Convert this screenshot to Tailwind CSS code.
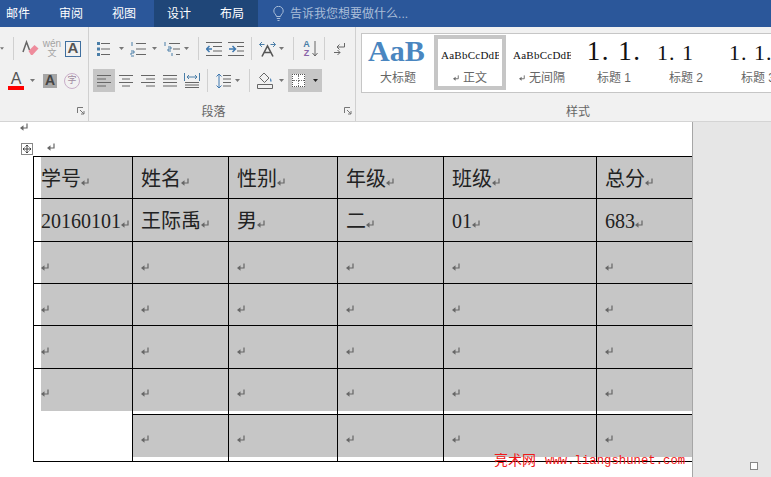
<!DOCTYPE html>
<html lang="zh-CN">
<head>
    <meta charset="UTF-8">
    <title>表格</title>
    <script src="https://cdn.jsdelivr.net/npm/@tailwindcss/browser@4"></script>
</head>
<body class="bg-white">
    <!-- shared icon bits -->
    <svg class="hidden" xmlns="http://www.w3.org/2000/svg">
        <symbol id="caret" viewBox="0 0 5 3"><path d="M0 0h5L2.500 3z" fill="#777"/></symbol>
        <symbol id="ret" viewBox="0 0 8 8"><path d="M7 .5V5H3" fill="none" stroke="#666" stroke-width="1.200"/><path d="M0 5l3.500-2.700v5.400z" fill="#666"/></symbol>
    </svg>

    <div class="relative w-[771px] h-[477px] overflow-hidden flex flex-col font-['Liberation_Sans','Noto_Sans_CJK_SC',sans-serif]">
        <!-- Title tabs -->
        <div class="h-[27px] shrink-0 bg-[#2b579a] flex items-center text-white text-[12px]">
            <span class="ml-[6px]">邮件</span>
            <span class="ml-[29px]">审阅</span>
            <span class="ml-[29px]">视图</span>
            <div class="ml-[18px] h-full w-[104px] bg-[#1f4678] flex items-center">
                <span class="ml-[13px]">设计</span>
                <span class="ml-[29px]">布局</span>
            </div>
            <svg class="ml-[15px]" width="11" height="15" viewBox="0 0 11 15" fill="none" stroke="#a9bdd8"><path d="M3.500 10.500C3 8 .8 7.500.8 5a4.700 4.700 0 019.400 0c0 2.500-2.200 3-2.700 5.500zM3.800 12.500h3.400M4.500 14.500h2"/></svg>
            <span class="ml-[6px] text-[#a9bdd8]">告诉我您想要做什么...</span>
        </div>

        <!-- Ribbon -->
        <div class="h-[95px] shrink-0 bg-[#f1f1f1] border-b border-[#d4d4d4] flex text-[#666]">
            <!-- Font group -->
            <div class="w-[89px] shrink-0 border-r border-[#d0d0d0] pt-[10px]">
                <div class="h-[23px] flex items-center">
                    <svg class="w-[4px] h-[3px]"><use href="#caret"/></svg>
                    <div class="ml-[9px] w-px h-[23px] bg-[#d0d0d0]"></div>
                    <svg class="ml-[8px]" width="17" height="17" viewBox="0 0 17 17"><path d="M1 12L4.500 2l3 8" fill="none" stroke="#666" stroke-width="1.500"/><path d="M6.500 11l6-6 4 3.500-6 6.500H9z" fill="#ee8c9c"/></svg>
                    <div class="ml-[4px] w-[18px] flex flex-col items-center text-[#a3a3a3]">
                        <span class="text-[10px] leading-[10px]">wén</span>
                        <span class="text-[9px] leading-[9px]">文</span>
                    </div>
                    <div class="ml-[4px] w-[16px] h-[16px] border border-[#3f6f9f] flex items-center justify-center text-[15px] font-bold text-[#555]">A</div>
                </div>
                <div class="mt-[9px] h-[23px] flex items-center">
                    <div class="ml-[8px] w-[16px] flex flex-col items-center">
                        <span class="text-[16px] leading-[15px] text-[#555]">A</span>
                        <div class="w-full h-[4px] bg-[#ff0000]"></div>
                    </div>
                    <svg class="ml-[6px] w-[5px] h-[3px]"><use href="#caret"/></svg>
                    <div class="ml-[8px] w-[14px] h-[14px] bg-[#a6a6a6] flex items-center justify-center text-[14px] font-bold text-[#444]">A</div>
                    <div class="ml-[7px] w-[16px] h-[16px] rounded-full border border-[#c9aec9] flex items-center justify-center text-[9px] text-[#a08aa0]">字</div>
                </div>
                <div class="relative mt-[11px] h-[18px]">
                    <svg class="absolute left-[77px] top-[4px]" width="8" height="8" viewBox="0 0 8 8" fill="none" stroke="#777"><path d="M.5 6V.5H6M3 3l4 4M7 4v3H4"/></svg>
                </div>
            </div>

            <!-- Paragraph group -->
            <div class="w-[267px] shrink-0 border-r border-[#d0d0d0] pt-[10px]">
                <div class="h-[23px] flex items-center">
                    <svg class="ml-[7px]" width="14" height="16" viewBox="0 0 14 16" stroke="#666"><path d="M5 2.500h9M5 8h9M5 13.500h9"/><path d="M1 1h3v3H1zM1 6.500h3v3H1zM1 12h3v3H1z" fill="#4a7ea8" stroke="none"/></svg>
                    <svg class="ml-[9px] w-[5px] h-[3px]"><use href="#caret"/></svg>
                    <svg class="ml-[6px]" width="16" height="16" viewBox="0 0 16 16" stroke="#666"><path d="M6 2.500h10M6 8h10M6 13.500h10"/><path d="M2 1v4M1 15h3M1 10h3v2H1v2" fill="none" stroke="#4a7ea8"/></svg>
                    <svg class="ml-[6px] w-[5px] h-[3px]"><use href="#caret"/></svg>
                    <svg class="ml-[6px]" width="17" height="16" viewBox="0 0 17 16" stroke="#666"><path d="M6 2.500h11M10 8h7M13 13.500h4"/><path d="M2 1v4M5 6h3v2H5v2h3M9 12v3" fill="none" stroke="#4a7ea8"/></svg>
                    <svg class="ml-[4px] w-[5px] h-[3px]"><use href="#caret"/></svg>
                    <div class="ml-[9px] w-px h-[23px] bg-[#d0d0d0]"></div>
                    <svg class="ml-[7px]" width="16" height="14" viewBox="0 0 16 14" stroke="#666"><path d="M0 .5h16M7 4.500h9M7 9h9M0 13.500h16"/><path d="M6 7H1M3.500 4L.5 7l3 3" fill="none" stroke="#3f79b0" stroke-width="1.500"/></svg>
                    <svg class="ml-[6px]" width="16" height="14" viewBox="0 0 16 14" stroke="#666"><path d="M0 .5h16M9 4.500h7M9 9h7M0 13.500h16"/><path d="M1 7h6M4.500 4l3 3-3 3" fill="none" stroke="#3f79b0" stroke-width="1.500"/></svg>
                    <div class="ml-[7px] w-px h-[23px] bg-[#d0d0d0]"></div>
                    <svg class="ml-[7px]" width="17" height="16" viewBox="0 0 17 16" fill="none"><path d="M3 15.500L8.500 5l5.500 10.500M5 11.500h7" stroke="#555" stroke-width="1.600"/><path d="M.5 3.500h5M3 1L.5 3.500 3 6M11.500 3.500h5M14 1l2.500 2.500L14 6" stroke="#4a7ea8"/></svg>
                    <svg class="ml-[3px] w-[5px] h-[3px]"><use href="#caret"/></svg>
                    <div class="ml-[9px] w-px h-[23px] bg-[#d0d0d0]"></div>
                    <div class="ml-[8px] w-[16px] flex items-center">
                        <div class="flex flex-col items-center w-[9px] text-[9px] font-bold leading-[9px]">
                            <span class="text-[#4a7ea8]">A</span>
                            <span class="text-[#8a64a8]">Z</span>
                        </div>
                        <svg class="ml-[1px]" width="6" height="16" viewBox="0 0 6 16" fill="none" stroke="#666"><path d="M3 0v15M.5 12L3 15l2.500-3"/></svg>
                    </div>
                    <div class="ml-[6px] w-px h-[23px] bg-[#d0d0d0]"></div>
                    <svg class="ml-[9px]" width="11" height="14" viewBox="0 0 11 14" fill="none" stroke="#666"><path d="M10.500 1v4H3M5.500 2.500L3 5l2.500 2.500M0 10.500h6M3.500 8l2.500 2.500L3.500 13"/></svg>
                </div>
                <div class="mt-[9px] h-[23px] flex items-center">
                    <div class="ml-[4px] w-[22px] h-[23px] bg-[#c6c6c6] flex items-center justify-center">
                        <svg width="14" height="12" viewBox="0 0 14 12" stroke="#666"><path d="M0 .5h14M0 4h9M0 7.500h14M0 11h9"/></svg>
                    </div>
                    <svg class="ml-[4px]" width="14" height="12" viewBox="0 0 14 12" stroke="#666"><path d="M0 .5h14M3 4h8M0 7.500h14M3 11h8"/></svg>
                    <svg class="ml-[8px]" width="14" height="12" viewBox="0 0 14 12" stroke="#666"><path d="M0 .5h14M5 4h9M0 7.500h14M5 11h9"/></svg>
                    <svg class="ml-[8px]" width="14" height="12" viewBox="0 0 14 12" stroke="#666"><path d="M0 .5h14M0 4h14M0 7.500h14M0 11h14"/></svg>
                    <svg class="ml-[7px]" width="16" height="16" viewBox="0 0 16 16" fill="none"><path d="M.5 0v8M15.500 0v8" stroke="#4a7ea8"/><path d="M3 4h10M5 2L3 4l2 2M11 2l2 2-2 2" stroke="#4a7ea8"/><path d="M1 9.500h14M1 12h14M1 14.500h14" stroke="#666"/></svg>
                    <div class="ml-[7px] w-px h-[23px] bg-[#d0d0d0]"></div>
                    <svg class="ml-[8px]" width="15" height="16" viewBox="0 0 15 16" fill="none"><path d="M7 2.500h8M7 6h8M7 9.500h8M7 13h8" stroke="#666"/><path d="M3 1v14M.5 3.500L3 1l2.500 2.500M.5 12.500L3 15l2.500-2.500" stroke="#3f79b0"/></svg>
                    <svg class="ml-[4px] w-[5px] h-[3px]"><use href="#caret"/></svg>
                    <div class="ml-[9px] w-px h-[23px] bg-[#d0d0d0]"></div>
                    <svg class="ml-[7px]" width="16" height="17" viewBox="0 0 16 17" fill="none"><path d="M7 1l5 5-4.500 4.500-5-5z" stroke="#666"/><path d="M13.500 6c1 2 1.500 3 .5 4-1-1-1.200-2-.5-4z" fill="#3f79b0"/><path d="M.5 12.500h15v4H.5z" stroke="#666"/></svg>
                    <svg class="ml-[6px] w-[5px] h-[3px]"><use href="#caret"/></svg>
                    <div class="ml-[4px] w-[34px] h-[23px] bg-[#c6c6c6] flex items-center">
                        <div class="ml-[4px] w-[13px] h-[13px] bg-white border border-dotted border-[#555] grid grid-cols-2 grid-rows-2">
                            <div class="border-r border-b border-dotted border-[#777]"></div>
                            <div class="border-b border-dotted border-[#777]"></div>
                            <div class="border-r border-dotted border-[#777]"></div>
                        </div>
                        <svg class="ml-[8px] w-[5px] h-[3px]"><path d="M0 0h5L2.500 3z" fill="#222"/></svg>
                    </div>
                </div>
                <div class="relative mt-[11px] h-[18px] flex items-center justify-center text-[12px] pr-[17px]">
                    段落
                    <svg class="absolute left-[255px] top-[4px]" width="8" height="8" viewBox="0 0 8 8" fill="none" stroke="#777"><path d="M.5 6V.5H6M3 3l4 4M7 4v3H4"/></svg>
                </div>
            </div>

            <!-- Styles group -->
            <div class="w-[444px] shrink-0 pt-[6px] pl-[5px] pr-[5px]">
                <div class="w-[440px] h-[60px] bg-white border border-[#c6c6c6] flex text-[12px]">
                    <div class="w-[72px] shrink-0 flex flex-col items-center pt-[3px]">
                        <span class="self-start ml-[6px] h-[28px] whitespace-nowrap text-[30px] leading-[28px] font-bold text-[#4a86c0] font-['Liberation_Serif',serif]">AaB</span>
                        <span class="mt-[4px]">大标题</span>
                    </div>
                    <div class="w-[72px] h-[55px] mt-[1px] shrink-0 border-4 border-[#c6c6c6] flex flex-col items-center">
                        <span class="mt-[9px] h-[14px] w-[58px] overflow-hidden whitespace-nowrap text-[11px] leading-[14px] tracking-[.25px] text-[#111] font-['Liberation_Serif',serif]">AaBbCcDdE</span>
                        <span class="mt-[8px] leading-[16px] flex items-center"><svg class="w-[6px] h-[6px] mr-[4px]"><use href="#ret"/></svg>正文</span>
                    </div>
                    <div class="w-[72px] shrink-0 flex flex-col items-center pt-[14px]">
                        <span class="h-[14px] w-[58px] overflow-hidden whitespace-nowrap text-[11px] leading-[14px] tracking-[.25px] text-[#111] font-['Liberation_Serif',serif]">AaBbCcDdE</span>
                        <span class="mt-[7px] flex items-center"><svg class="w-[6px] h-[6px] mr-[4px]"><use href="#ret"/></svg>无间隔</span>
                    </div>
                    <div class="w-[72px] shrink-0 flex flex-col items-center pt-[3px]">
                        <span class="h-[28px] text-[27px] leading-[28px] tracking-[1.500px] whitespace-pre text-[#111] font-['Liberation_Serif',serif]">1. 1.</span>
                        <span class="mt-[4px]">标题 1</span>
                    </div>
                    <div class="w-[72px] shrink-0 flex flex-col items-center pt-[3px]">
                        <span class="self-start ml-[7px] h-[28px] pt-[3px] text-[22px] leading-[25px] tracking-[1px] whitespace-pre text-[#111] font-['Liberation_Serif',serif]">1. 1</span>
                        <span class="mt-[4px]">标题 2</span>
                    </div>
                    <div class="w-[72px] shrink-0 flex flex-col items-center pt-[3px]">
                        <span class="self-start ml-[7px] h-[28px] pt-[3px] text-[22px] leading-[25px] tracking-[1px] whitespace-pre text-[#111] font-['Liberation_Serif',serif]">1. 1.</span>
                        <span class="mt-[4px]">标题 3</span>
                    </div>
                </div>
                <div class="mt-[10px] h-[18px] flex items-center justify-center text-[12px]">样式</div>
            </div>
        </div>

        <!-- Document -->
        <div class="flex-1 flex min-h-0">
            <div class="w-[692px] shrink-0 bg-white">
                <svg class="ml-[20px] mt-[1px] block" width="8" height="8"><use href="#ret"/></svg>
                <div class="ml-[21px] mt-[12px] h-[13px] flex items-start">
                    <div class="w-[12px] h-[12px] border border-[#888] flex items-center justify-center">
                        <svg width="8" height="8" viewBox="0 0 8 8" fill="none" stroke="#444"><path d="M4 0v8M0 4h8M2.500 1.500L4 0l1.500 1.500M2.500 6.500L4 8l1.500-1.500M1.500 2.500L0 4l1.500 1.500M6.500 2.500L8 4 6.500 5.500"/></svg>
                    </div>
                    <svg class="ml-[14px]" width="8" height="8"><use href="#ret"/></svg>
                </div>

                <!-- Table -->
                <div class="ml-[33px] grid grid-cols-[99px_96px_109px_106px_153px_95px] grid-rows-[42px_43px_42px_42px_43px_46px_47px] border-l border-t border-black text-[20px] text-[#222] font-['Liberation_Serif','Noto_Sans_CJK_SC',serif]">
                    <div class="border-r border-b border-black pl-[7px]"><div class="h-full bg-[#c6c6c6] pt-[2px] flex items-center">学号<svg class="mt-[6px]" width="8" height="8"><use href="#ret"/></svg></div></div>
                    <div class="border-r border-b border-black bg-[#c6c6c6] pl-2 pt-[2px] flex items-center">姓名<svg class="mt-[6px]" width="8" height="8"><use href="#ret"/></svg></div>
                    <div class="border-r border-b border-black bg-[#c6c6c6] pl-2 pt-[2px] flex items-center">性别<svg class="mt-[6px]" width="8" height="8"><use href="#ret"/></svg></div>
                    <div class="border-r border-b border-black bg-[#c6c6c6] pl-2 pt-[2px] flex items-center">年级<svg class="mt-[6px]" width="8" height="8"><use href="#ret"/></svg></div>
                    <div class="border-r border-b border-black bg-[#c6c6c6] pl-2 pt-[2px] flex items-center">班级<svg class="mt-[6px]" width="8" height="8"><use href="#ret"/></svg></div>
                    <div class="border-b border-black bg-[#c6c6c6] pl-2 pt-[2px] flex items-center">总分<svg class="mt-[6px]" width="8" height="8"><use href="#ret"/></svg></div>

                    <div class="border-r border-b border-black pl-[7px]"><div class="h-full bg-[#c6c6c6] pt-[2px] flex items-center">20160101<svg class="mt-[6px]" width="8" height="8"><use href="#ret"/></svg></div></div>
                    <div class="border-r border-b border-black bg-[#c6c6c6] pl-2 pt-[2px] flex items-center">王际禹<svg class="mt-[6px]" width="8" height="8"><use href="#ret"/></svg></div>
                    <div class="border-r border-b border-black bg-[#c6c6c6] pl-2 pt-[2px] flex items-center">男<svg class="mt-[6px]" width="8" height="8"><use href="#ret"/></svg></div>
                    <div class="border-r border-b border-black bg-[#c6c6c6] pl-2 pt-[2px] flex items-center">二<svg class="mt-[6px]" width="8" height="8"><use href="#ret"/></svg></div>
                    <div class="border-r border-b border-black bg-[#c6c6c6] pl-2 pt-[2px] flex items-center">01<svg class="mt-[6px]" width="8" height="8"><use href="#ret"/></svg></div>
                    <div class="border-b border-black bg-[#c6c6c6] pl-2 pt-[2px] flex items-center">683<svg class="mt-[6px]" width="8" height="8"><use href="#ret"/></svg></div>

                    <div class="border-r border-b border-black pl-[7px]"><div class="h-full bg-[#c6c6c6] flex items-center pt-[8px]"><svg width="8" height="8"><use href="#ret"/></svg></div></div>
                    <div class="border-r border-b border-black bg-[#c6c6c6] pl-2 pt-[8px] flex items-center"><svg width="8" height="8"><use href="#ret"/></svg></div>
                    <div class="border-r border-b border-black bg-[#c6c6c6] pl-2 pt-[8px] flex items-center"><svg width="8" height="8"><use href="#ret"/></svg></div>
                    <div class="border-r border-b border-black bg-[#c6c6c6] pl-2 pt-[8px] flex items-center"><svg width="8" height="8"><use href="#ret"/></svg></div>
                    <div class="border-r border-b border-black bg-[#c6c6c6] pl-2 pt-[8px] flex items-center"><svg width="8" height="8"><use href="#ret"/></svg></div>
                    <div class="border-b border-black bg-[#c6c6c6] pl-2 pt-[8px] flex items-center"><svg width="8" height="8"><use href="#ret"/></svg></div>

                    <div class="border-r border-b border-black pl-[7px]"><div class="h-full bg-[#c6c6c6] flex items-center pt-[8px]"><svg width="8" height="8"><use href="#ret"/></svg></div></div>
                    <div class="border-r border-b border-black bg-[#c6c6c6] pl-2 pt-[8px] flex items-center"><svg width="8" height="8"><use href="#ret"/></svg></div>
                    <div class="border-r border-b border-black bg-[#c6c6c6] pl-2 pt-[8px] flex items-center"><svg width="8" height="8"><use href="#ret"/></svg></div>
                    <div class="border-r border-b border-black bg-[#c6c6c6] pl-2 pt-[8px] flex items-center"><svg width="8" height="8"><use href="#ret"/></svg></div>
                    <div class="border-r border-b border-black bg-[#c6c6c6] pl-2 pt-[8px] flex items-center"><svg width="8" height="8"><use href="#ret"/></svg></div>
                    <div class="border-b border-black bg-[#c6c6c6] pl-2 pt-[8px] flex items-center"><svg width="8" height="8"><use href="#ret"/></svg></div>

                    <div class="border-r border-b border-black pl-[7px]"><div class="h-full bg-[#c6c6c6] flex items-center pt-[8px]"><svg width="8" height="8"><use href="#ret"/></svg></div></div>
                    <div class="border-r border-b border-black bg-[#c6c6c6] pl-2 pt-[8px] flex items-center"><svg width="8" height="8"><use href="#ret"/></svg></div>
                    <div class="border-r border-b border-black bg-[#c6c6c6] pl-2 pt-[8px] flex items-center"><svg width="8" height="8"><use href="#ret"/></svg></div>
                    <div class="border-r border-b border-black bg-[#c6c6c6] pl-2 pt-[8px] flex items-center"><svg width="8" height="8"><use href="#ret"/></svg></div>
                    <div class="border-r border-b border-black bg-[#c6c6c6] pl-2 pt-[8px] flex items-center"><svg width="8" height="8"><use href="#ret"/></svg></div>
                    <div class="border-b border-black bg-[#c6c6c6] pl-2 pt-[8px] flex items-center"><svg width="8" height="8"><use href="#ret"/></svg></div>

                    <!-- Last rows: first cell is merged, grey stops short of the bottom line -->
                    <div class="row-span-2 border-r border-b border-black pl-[7px]"><div class="h-[42px] bg-[#c6c6c6] flex items-center pt-[6px]"><svg width="8" height="8"><use href="#ret"/></svg></div></div>
                    <div class="border-r border-b border-black"><div class="h-[42px] bg-[#c6c6c6] pl-2 pt-[6px] flex items-center"><svg width="8" height="8"><use href="#ret"/></svg></div></div>
                    <div class="border-r border-b border-black"><div class="h-[42px] bg-[#c6c6c6] pl-2 pt-[6px] flex items-center"><svg width="8" height="8"><use href="#ret"/></svg></div></div>
                    <div class="border-r border-b border-black"><div class="h-[42px] bg-[#c6c6c6] pl-2 pt-[6px] flex items-center"><svg width="8" height="8"><use href="#ret"/></svg></div></div>
                    <div class="border-r border-b border-black"><div class="h-[42px] bg-[#c6c6c6] pl-2 pt-[6px] flex items-center"><svg width="8" height="8"><use href="#ret"/></svg></div></div>
                    <div class="border-b border-black"><div class="h-[42px] bg-[#c6c6c6] pl-2 pt-[6px] flex items-center"><svg width="8" height="8"><use href="#ret"/></svg></div></div>

                    <div class="border-r border-b border-black"><div class="h-[42px] bg-[#c6c6c6] pl-2 pt-[6px] flex items-center"><svg width="8" height="8"><use href="#ret"/></svg></div></div>
                    <div class="border-r border-b border-black"><div class="h-[42px] bg-[#c6c6c6] pl-2 pt-[6px] flex items-center"><svg width="8" height="8"><use href="#ret"/></svg></div></div>
                    <div class="border-r border-b border-black"><div class="h-[42px] bg-[#c6c6c6] pl-2 pt-[6px] flex items-center"><svg width="8" height="8"><use href="#ret"/></svg></div></div>
                    <div class="border-r border-b border-black"><div class="h-[42px] bg-[#c6c6c6] pl-2 pt-[6px] flex items-center"><svg width="8" height="8"><use href="#ret"/></svg></div></div>
                    <div class="border-b border-black"><div class="h-[42px] bg-[#c6c6c6] pl-2 pt-[6px] flex items-center"><svg width="8" height="8"><use href="#ret"/></svg></div></div>
                </div>
            </div>
            <div class="flex-1 bg-[#e6e6e6] border-l border-[#a6a6a6]"></div>
        </div>

        <!-- Resize handle and watermark sit over the page -->
        <div class="absolute left-[750px] top-[462px] w-[8px] h-[8px] bg-white border border-[#888]"></div>
        <div class="absolute left-[494px] top-[449px] flex items-center text-[#f01818]">
            <span class="text-[14px] leading-[20px]">亮术网</span>
            <span class="ml-[9px] mt-[2px] text-[12.300px] leading-[20px] font-['Liberation_Mono',monospace]">www.liangshunet.com</span>
        </div>
    </div>
</body>
</html>
